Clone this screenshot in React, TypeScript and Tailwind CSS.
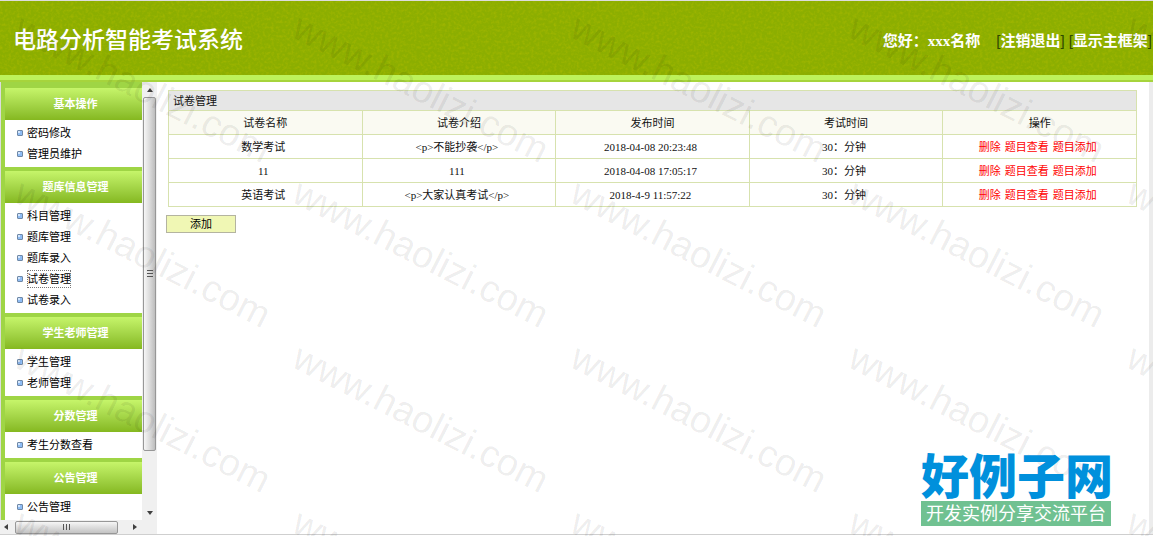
const MENU = [
  { title: '基本操作', items: ['密码修改', '管理员维护'] },
  { title: '题库信息管理', items: ['科目管理', '题库管理', '题库录入', '试卷管理', '试卷录入'] },
  { title: '学生老师管理', items: ['学生管理', '老师管理'] },
  { title: '分数管理', items: ['考生分数查看'] },
  { title: '公告管理', items: ['公告管理'] },
]

const COLUMNS = ['试卷名称', '试卷介绍', '发布时间', '考试时间', '操作']

const PAPERS = [
  { name: '数学考试', intro: '<p>不能抄袭</p>', time: '2018-04-08 20:23:48', length: '30：分钟' },
  { name: '11', intro: '111', time: '2018-04-08 17:05:17', length: '30：分钟' },
  { name: '英语考试', intro: '<p>大家认真考试</p>', time: '2018-4-9 11:57:22', length: '30：分钟' },
]

const ACTIONS = ['删除', '题目查看', '题目添加']

const cell = 'border border-[#d7e2ae] pr-1'

function Bullet() {
  return (
    <svg viewBox="0 0 6 6" className="w-[6px] h-[6px] shrink-0">
      <rect x="0.5" y="0.5" width="5" height="5" rx="0.5" fill="#8fbdf5" stroke="#6f88a6" />
      <rect x="1" y="1" width="2" height="2" fill="#d3e6fd" />
    </svg>
  )
}

function BracketLink({ href, text }: { href: string; text: string }) {
  return (
    <span className="font-['Liberation_Sans','Noto_Sans_CJK_SC',sans-serif]">
      <span className="font-normal text-[#2f4a00]">[</span>
      <a href={href}>{text}</a>
      <span className="font-normal text-[#2f4a00]">]</span>
    </span>
  )
}

function Header() {
  return (
    <header className="shrink-0 border-t border-[#dcdcdc]">
      <div className="relative h-[74px] bg-[#8cae00]">
        {/* leather grain */}
        <svg className="absolute inset-0 w-full h-full" aria-hidden="true">
          <filter id="grain">
            <feTurbulence type="fractalNoise" baseFrequency="0.35" numOctaves="2" seed="4" />
            <feColorMatrix values="0 0 0 0 0.38  0 0 0 0 0.48  0 0 0 0 0  0 1.6 0 0 -0.68" />
          </filter>
          <rect width="100%" height="100%" filter="url(#grain)" />
        </svg>
        <div className="relative h-full flex items-center justify-between pl-[13px] pr-px pt-[6px]">
          <h1 className="text-[23px] leading-[32px] font-medium text-white">电路分析智能考试系统</h1>
          <div className="flex items-center text-[15px] leading-[20px] font-bold text-white whitespace-nowrap">
            <span className="mr-4">您好：xxx名称</span>
            <span className="flex gap-1">
              <BracketLink href="#logout" text="注销退出" />
              <BracketLink href="#frame" text="显示主框架" />
            </span>
          </div>
        </div>
      </div>
      <div className="h-[7px] bg-[#bdf25a] border-b-2 border-[#a6d43c]" />
    </header>
  )
}

function Sidebar() {
  return (
    <aside className="w-[157px] shrink-0 flex flex-col">
      <div className="flex-1 min-h-0 flex">
        <nav className="flex-1 overflow-hidden flex flex-col bg-[#9fd545] border-l border-[#dcdcdc] pl-[4px] pt-[6px]">
          {MENU.map((group) => (
            <section key={group.title} className="shrink-0 mb-1 last:mb-0 last:grow bg-white">
              <h2 className="h-8 flex items-center justify-center pl-1 text-[11px] font-bold text-white bg-linear-to-b from-[#c6f56a] to-[#85b81f]">
                {group.title}
              </h2>
              <ul className="pt-[2px] pb-[3px]">
                {group.items.map((item) => (
                  <li key={item} className="h-[21px] flex items-center gap-1 pl-[12px]">
                    <Bullet />
                    <a
                      href="#main"
                      className={item === '试卷管理' ? 'text-[11px] leading-[18px] outline outline-dotted -outline-offset-1 outline-[#777]' : 'text-[11px] leading-[18px]'}
                    >
                      {item}
                    </a>
                  </li>
                ))}
              </ul>
            </section>
          ))}
        </nav>
        <div className="w-[15px] flex flex-col items-center bg-[#f0f0f0]">
          <svg viewBox="0 0 6 4" className="w-[6px] h-[4px] mt-[6px]"><path d="M0 4 3 0l3 4z" fill="#404040" /></svg>
          <div className="w-[13px] h-[354px] mt-[5px] flex items-center justify-center rounded-[2px] border border-[#979797] bg-linear-to-r from-[#f6f6f6] via-[#dcdcdc] to-[#bdbdbd]">
            <svg viewBox="0 0 6 8" className="w-[6px] h-[8px]"><path d="M0 .5h6M0 3.5h6M0 6.5h6" stroke="#555" /></svg>
          </div>
          <svg viewBox="0 0 6 4" className="w-[6px] h-[4px] mt-auto mb-[5px]"><path d="M0 0h6L3 4z" fill="#404040" /></svg>
        </div>
      </div>
      <div className="h-[14px] shrink-0 flex items-center bg-[#f0f0f0]">
        <svg viewBox="0 0 4 6" className="w-[4px] h-[6px] ml-[4px]"><path d="M4 0v6L0 3z" fill="#404040" /></svg>
        <div className="w-[103px] h-[13px] ml-[7px] flex items-center justify-center rounded-[2px] border border-[#979797] bg-linear-to-b from-[#f6f6f6] via-[#dcdcdc] to-[#c4c4c4]">
          <svg viewBox="0 0 8 6" className="w-[8px] h-[6px]"><path d="M.5 0v6M3.5 0v6M6.5 0v6" stroke="#555" /></svg>
        </div>
        <svg viewBox="0 0 4 6" className="w-[4px] h-[6px] ml-[15px]"><path d="M0 0v6l4-3z" fill="#404040" /></svg>
      </div>
    </aside>
  )
}

function PaperTable() {
  return (
    <table className="w-full table-fixed border-collapse text-[11px] leading-[16px] text-center text-[#111]">
      <thead>
        <tr className="h-[20px] bg-[#e6e6e6]">
          <th colSpan={5} className="border border-[#d7e2ae] pl-1 text-left font-normal">试卷管理</th>
        </tr>
        <tr className="h-[24px] bg-[#fafaf2]">
          {COLUMNS.map((c) => (
            <th key={c} className="border border-[#d7e2ae] font-normal">{c}</th>
          ))}
        </tr>
      </thead>
      <tbody>
        {PAPERS.map((p) => (
          <tr key={p.name} className="h-[24px]">
            <td className={cell}>{p.name}</td>
            <td className={cell}>{p.intro}</td>
            <td className={cell}>{p.time}</td>
            <td className={cell}>{p.length}</td>
            <td className={cell}>
              <span className="flex justify-center gap-1 text-[#ff0000]">
                {ACTIONS.map((a) => (
                  <a key={a} href="#paper">{a}</a>
                ))}
              </span>
            </td>
          </tr>
        ))}
      </tbody>
    </table>
  )
}

function SiteLogo() {
  return (
    <div className="absolute right-[42px] bottom-[10px] w-[190px]">
      <div className="mb-1 text-[48px] leading-[48px] font-black text-[#0090dc] whitespace-nowrap font-['Noto_Sans_CJK_SC',sans-serif]">好例子网</div>
      <div className="h-[25px] flex items-center justify-center bg-[#70c191] text-[18px] leading-none text-white whitespace-nowrap">
        开发实例分享交流平台
      </div>
    </div>
  )
}

// diagonal site name, repeated every 278 x 165
function Watermark() {
  const cols = [0, 1, 2, 3, 4]
  const rows = [0, 1, 2, 3]
  return (
    <svg className="absolute inset-0 w-full h-full pointer-events-none" aria-hidden="true">
      {rows.map((r) =>
        cols.map((c) => (
          <text
            key={`${r}-${c}`}
            transform={`translate(${12 + c * 278} ${36 + r * 165}) rotate(27)`}
            className="text-[38px] font-['Liberation_Sans',sans-serif]"
            fill="#000"
            fillOpacity="0.08"
          >
            www.haolizi.com
          </text>
        )),
      )}
    </svg>
  )
}

export default function App() {
  return (
    <div className="relative h-screen overflow-hidden flex flex-col bg-white text-black font-['Liberation_Serif','Noto_Sans_CJK_SC',serif]">
      <Header />
      <div className="flex-1 min-h-0 flex">
        <Sidebar />
        <main className="flex-1 min-w-0 pl-[11px] pr-[12px] pt-[8px]">
          <PaperTable />
          <button className="block w-[70px] h-[18px] mt-[8px] -ml-[2px] border border-[#b4b4a0] bg-[#f0f7b4] text-[11px] leading-[14px]">添加</button>
        </main>
        <div className="w-[4px] bg-[#ececec]" />
      </div>
      <div className="h-[2px] shrink-0 border-t border-[#cfcfcf]" />
      <Watermark />
      <SiteLogo />
    </div>
  )
}
